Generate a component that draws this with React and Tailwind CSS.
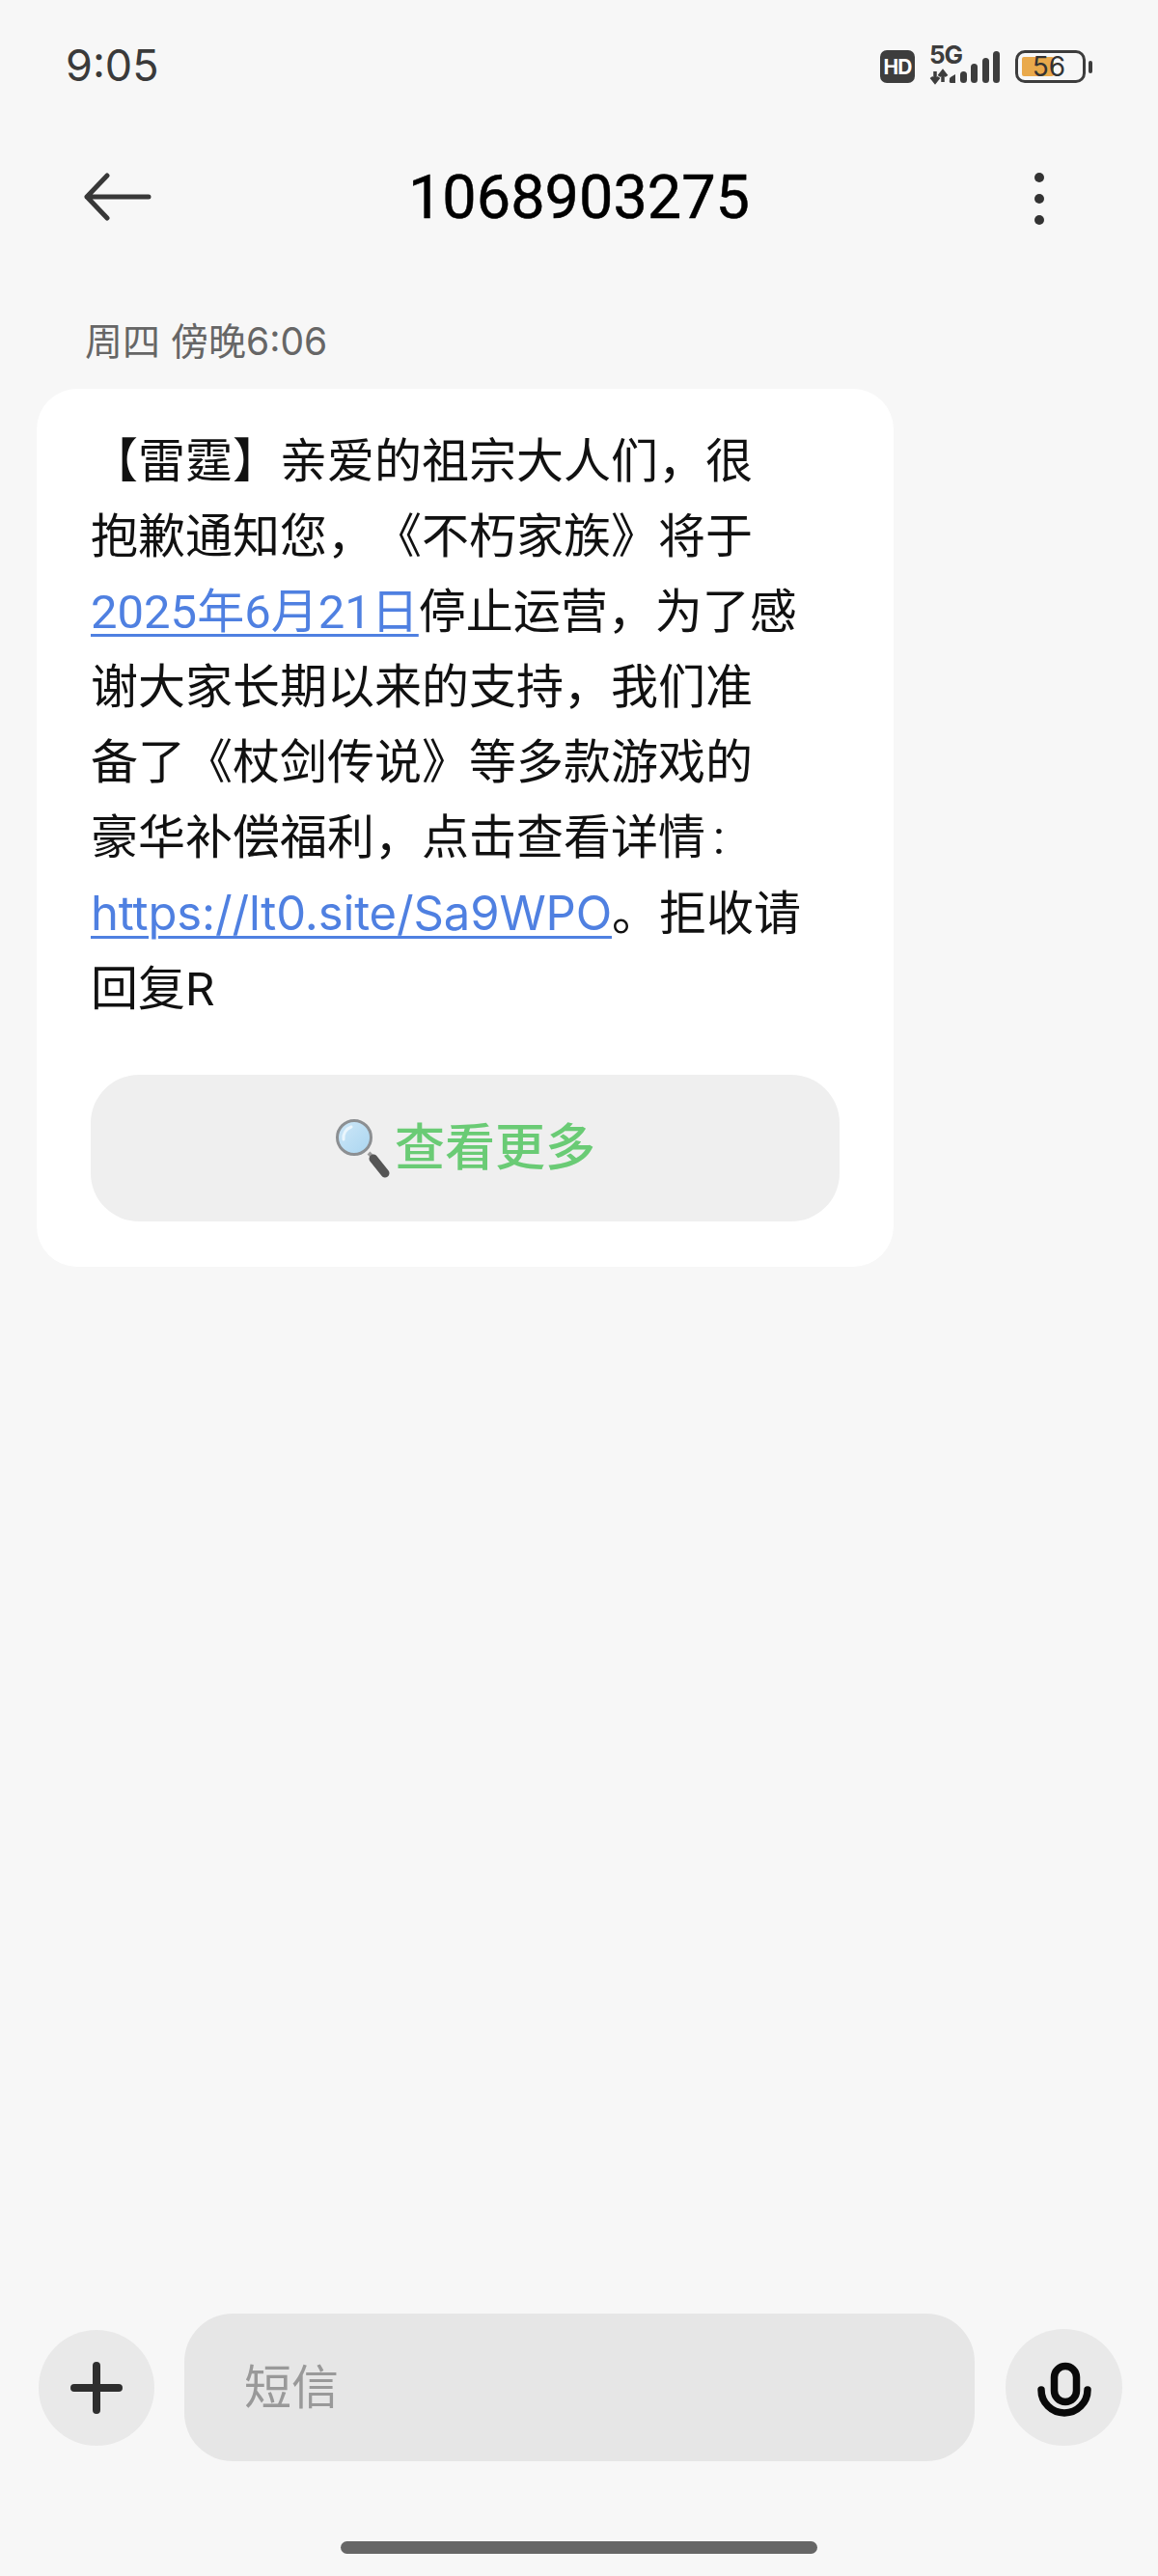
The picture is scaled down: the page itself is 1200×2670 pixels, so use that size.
const cjk = { fontFamily: '"Inter","Noto Sans CJK SC",sans-serif' };
const rb = { fontFamily: 'Roboto,"Noto Sans CJK SC",sans-serif' };

function Magnifier() {
  return (
    <svg width="62" height="62" viewBox="0 0 62 62" className="shrink-0">
      <defs>
        <linearGradient id="lens" x1="0" y1="0" x2="1" y2="1">
          <stop offset="0" stopColor="#cfe8f8" />
          <stop offset="1" stopColor="#a9d5f0" />
        </linearGradient>
      </defs>
      <path d="M35 36 L40 41" stroke="#9a9a9a" strokeWidth="4" />
      <path d="M40 42 L52 57" stroke="#555" strokeWidth="9" strokeLinecap="round" />
      <circle cx="20" cy="20" r="17.5" fill="url(#lens)" stroke="#8c8f92" strokeWidth="3" />
      <path d="M9 22 A12 12 0 0 1 17 9" fill="none" stroke="#eaf6fd" strokeWidth="3" strokeLinecap="round" />
    </svg>
  );
}

export default function App() {
  return (
    <div className="flex h-[2670px] w-[1200px] flex-col overflow-hidden bg-[#f7f7f7] text-black [text-spacing-trim:space-all]" style={cjk}>
      <div className="flex h-[138px] items-start justify-between pl-[68px] pr-[68px] pt-[40px]">
        <span className="text-[45px] leading-[56px] text-[#3a3a3a]">9:05</span>
        <div className="mt-[8px] flex items-start">
          <div className="mt-[4px] flex h-[34px] w-[36px] items-center justify-center rounded-[7px] bg-[#3d3d3d] text-[21px] font-bold leading-none tracking-[-1px] text-white">HD</div>
          <svg width="72" height="42" viewBox="0 0 72 42" className="ml-[16px] mt-[-1px] overflow-visible">
            <text x="-1" y="19" fontSize="26" fontWeight="700" fill="#3d3d3d" fontFamily="Inter, sans-serif" letterSpacing="-1">5G</text>
            <path d="M5 27v11M1 33l4 5 4-5M13 38V27M9 32l4-5 4 5" fill="none" stroke="#3d3d3d" strokeWidth="3.5" />
            <path d="M20 36a3 3 0 0 1 1-3l5-3v9h-4a2 2 0 0 1-2-3z" fill="#3d3d3d" />
            <rect x="31" y="27" width="7" height="12" rx="3.5" fill="#3d3d3d" />
            <rect x="42" y="19" width="7" height="20" rx="3.5" fill="#3d3d3d" />
            <rect x="54" y="13" width="7" height="26" rx="3.5" fill="#3d3d3d" />
            <rect x="65" y="6" width="7" height="33" rx="3.5" fill="#3d3d3d" />
          </svg>
          <div className="ml-[16px] mt-[4px] flex items-center">
            <div className="relative h-[34px] w-[73px] rounded-[10px] border-[3px] border-[#3d3d3d]">
              <div className="absolute bottom-[4px] left-[4px] top-[4px] w-[33px] rounded-[2px] bg-[#e9a94b]" />
              <div className="absolute inset-0 flex items-center justify-center pr-[3px] text-[28px] leading-none text-[#333]">56</div>
            </div>
            <div className="ml-[3px] h-[13px] w-[4px] rounded-full bg-[#3d3d3d]" />
          </div>
        </div>
      </div>

      <div className="relative flex h-[132px] items-center justify-center">
        <svg width="70" height="50" viewBox="0 0 70 50" className="absolute left-[87px] top-[41px]" fill="none" stroke="#383838" strokeWidth="5" strokeLinecap="round" strokeLinejoin="round">
          <path d="M67 25H3M24 3L3 25l21 22" />
        </svg>
        <span className="text-[63px] leading-none text-black [-webkit-text-stroke:0.5px_black]" style={{ fontFamily: 'Roboto, sans-serif' }}>1068903275</span>
        <div className="absolute left-[1072px] top-[41px] flex flex-col gap-[12px]">
          <div className="size-[10px] rounded-full bg-[#333]" />
          <div className="size-[10px] rounded-full bg-[#333]" />
          <div className="size-[10px] rounded-full bg-[#333]" />
        </div>
      </div>

      <div className="mt-[58px] pl-[88px] text-[39px] leading-[52px] text-[#666]">周四 傍晚6:06</div>

      <div className="ml-[38px] mt-[23px] w-[888px] rounded-[42px] bg-white px-[56px] pb-[47px] pt-[37px]">
        <div className="text-[49px] leading-[78px] text-[#111]" style={rb}>
          【雷霆】亲爱的祖宗大人们，很<br />
          抱歉通知您，《不朽家族》将于<br />
          <span className="text-[#4f80e1] underline decoration-[3px] underline-offset-[6px]">2025年6月21日</span>停止运营，为了感<br />
          谢大家长期以来的支持，我们准<br />
          备了《杖剑传说》等多款游戏的<br />
          豪华补偿福利，点击查看详情<span className="pl-[8px]">:</span><br />
          <span className="text-[#4f80e1] underline decoration-[3px] underline-offset-[6px] tracking-[-0.15px]" style={cjk}>https://lt0.site/Sa9WPO</span>。拒收请<br />
          回复R
        </div>
        <div className="mt-[49px] flex h-[152px] items-center justify-center rounded-[50px] bg-[#efefef]">
          <Magnifier />
          <span className="text-[52px] font-medium leading-none text-[#6acb75]">查看更多</span>
        </div>
      </div>

      <div className="mt-auto flex items-center pl-[40px] pr-[37px]">
        <div className="flex size-[120px] shrink-0 items-center justify-center rounded-full bg-[#e9e9e9]">
          <svg width="54" height="54" viewBox="0 0 54 54" stroke="#2e2e2e" strokeWidth="8" strokeLinecap="round">
            <path d="M27 4v46M4 27h46" />
          </svg>
        </div>
        <div className="ml-[31px] flex h-[153px] w-[820px] items-center rounded-[50px] bg-[#e6e6e6] pl-[62px] text-[49px] text-[#999]">短信</div>
        <div className="ml-[32px] flex size-[121px] shrink-0 items-center justify-center rounded-full bg-[#e9e9e9]">
          <svg width="58" height="60" viewBox="0 0 58 60" fill="none" stroke="#0a0a0a" strokeWidth="7.5" strokeLinecap="round">
            <rect x="18.5" y="7.5" width="23" height="37" rx="11.5" />
            <path d="M5 32a24 24 0 0 0 48 0" />
          </svg>
        </div>
      </div>
      <div className="mb-[23px] mt-[83px] flex justify-center">
        <div className="h-[13px] w-[494px] rounded-full bg-[#666]" />
      </div>
    </div>
  );
}
